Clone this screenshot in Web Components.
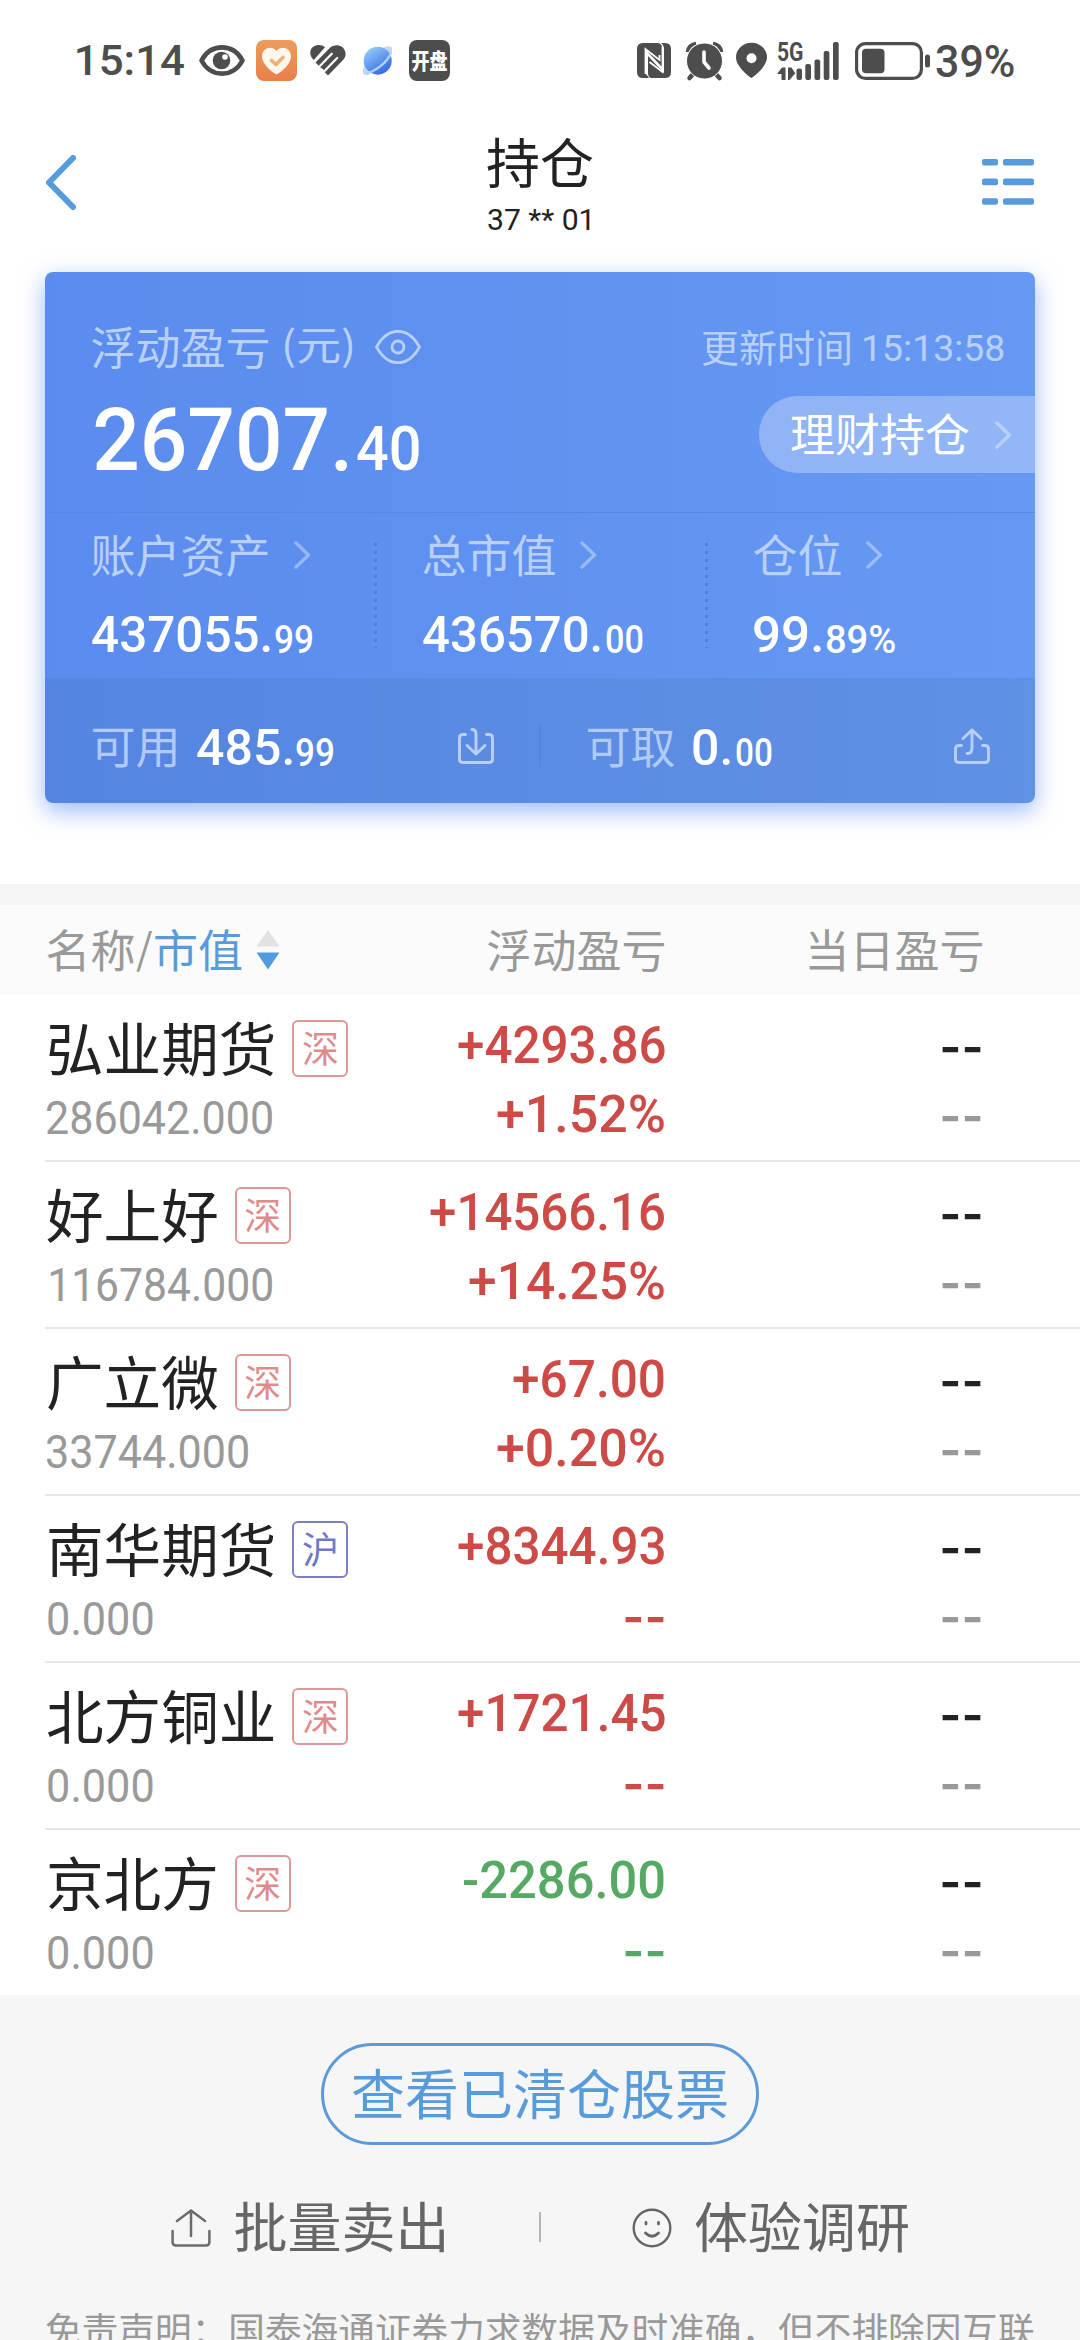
<!DOCTYPE html>
<html lang="zh-CN">
<head>
<meta charset="utf-8">
<title>持仓</title>
<style>
body{margin:0;background:#fff;width:1080px;height:2340px;overflow:hidden;font-family:"Noto Sans CJK SC",sans-serif;color:#222}
</style>
</head>
<body>
<holdings-page></holdings-page>
<script>
const canvas = document.createElement('canvas').getContext('2d');

function define(name, css, html, init) {
  const tpl = document.createElement('template');
  tpl.innerHTML = `<style>:host{display:block;box-sizing:border-box}${css}</style>${html}`;
  customElements.define(name, class extends HTMLElement {
    connectedCallback() {
      if (this.shadowRoot) return;
      const root = this.attachShadow({ mode: 'open' });
      root.append(tpl.content.cloneNode(true));
      if (init) init(this, root);
    }
  });
}

/* Chinese label; optical centring of the ideographs in their line */
define('cn-text', 'span{display:block;line-height:1;margin-top:-.075em;white-space:nowrap} :host{flex:none;white-space:nowrap}', '<span><slot></slot></span>');

/* Numerals whose glyph outlines fill exactly w x h */
define('num-text', ':host{flex:none} span{display:block;width:max-content;white-space:pre;line-height:1;transform-origin:0 0}', '<span><slot></slot></span>',
  (el, root) => {
    const w = +el.getAttribute('w'), h = +el.getAttribute('h');
    const wt = el.getAttribute('wt') || 500, fam = el.getAttribute('fam') || 'Roboto';
    const size = Math.round(+el.getAttribute('size') || h / 0.73);
    canvas.font = `${wt} ${size}px ${fam.includes(' ') ? '"' + fam + '"' : fam}`;
    const m = canvas.measureText(el.textContent);
    const sx = w / (m.actualBoundingBoxRight + m.actualBoundingBoxLeft);
    const sy = h / (m.actualBoundingBoxAscent + m.actualBoundingBoxDescent);
    const A = m.fontBoundingBoxAscent, D = m.fontBoundingBoxDescent;
    const base = (size - A - D) / 2 + A;
    const s = root.querySelector('span');
    s.style.font = `${wt} ${size}px/1 "${fam}",sans-serif`;
    s.style.transform = `matrix(${sx},0,0,${sy},${sx * m.actualBoundingBoxLeft},${-sy * (base - m.actualBoundingBoxAscent)})`;
    el.style.width = w + 'px';
    el.style.height = h + 'px';
  });

define('chevron-icon', ':host{width:17px;height:28px;flex:none} svg{display:block}',
  '<svg width="17" height="28" fill="none" stroke="#fff" stroke-opacity=".36" stroke-width="3.4" stroke-linecap="round" stroke-linejoin="round"><path d="M2 2 14.5 14 2 26"/></svg>');

define('status-bar', `
:host{height:120px;display:flex;align-items:center;padding:1px 0 0 77px;color:#4d4d4d}
svg{display:block;flex:none;overflow:visible}
.app{width:41px;height:41px;border-radius:8px;background:#4d4d4d;color:#fff;display:flex;align-items:center;justify-content:center;margin-left:15.5px}`, `
<num-text w="107" h="31">15:14</num-text>
<svg style="margin-left:15px" width="46" height="31" viewBox="0 0 46 31"><path d="M2.500 15.500C12-2 34-2 43.500 15.500 34 33 12 33 2.500 15.500Z" fill="none" stroke="#4d4d4d" stroke-width="4.600" stroke-linejoin="round"/><circle cx="22.500" cy="15.500" r="8.800" fill="#4d4d4d"/><circle cx="26" cy="12" r="2.800" fill="#fff"/></svg>
<svg style="margin-left:10.500px" width="41" height="41" viewBox="0 0 41 41"><defs><linearGradient id="o" x2="0" y2="1"><stop stop-color="#ec9c5b"/><stop offset="1" stop-color="#e97f4b"/></linearGradient></defs><rect width="41" height="41" rx="8" fill="url(#o)"/><path d="M20.500 34.500C14 31 6 23.500 6 16.500 6 8 16 5 20.500 11 25 5 35 8 35 16.500 35 23.500 27 31 20.500 34.500Z" fill="#fff6ec"/><path d="M15.500 20.500 20 24.500 27 17.500" fill="none" stroke="#ecb079" stroke-width="3.600" stroke-linecap="round" stroke-linejoin="round"/></svg>
<svg style="margin-left:13px" width="36" height="31" viewBox="0 0 36 31"><path d="M3.800 15C-2 10-.5 1 7 .2 10-.2 13 .5 15 2.200Z" fill="#4d4d4d"/><path d="M5.500 17.500 19.500 3.200C24-1 31-.5 34 4 36.500 8 36 12 33 15L18 30.500 14.500 27 15.500 26 10.500 22.500Z" fill="#4d4d4d"/><path d="M8.700 22.300 21.800 8.700M13.600 27 27.200 13" stroke="#fff" stroke-width="2.200" stroke-linecap="round"/></svg>
<svg style="margin-left:17.500px" width="30" height="30" viewBox="0 0 30 30"><defs><linearGradient id="p" x1=".2" y1=".1" x2=".8" y2="1"><stop stop-color="#8fc8f8"/><stop offset=".5" stop-color="#5c94ee"/><stop offset="1" stop-color="#2f62dc"/></linearGradient></defs><path d="M20 2C28-2 31 1 28 9M1.500 19C-1 25-1.500 31 7 28.500" fill="#c4d6f8"/><circle cx="14.700" cy="14.700" r="14" fill="url(#p)"/><path d="M1 27.500C11 27 24 17 28.500 6" fill="none" stroke="#b5d4fb" stroke-width="2.200"/></svg>
<div class="app"><num-text w="35" h="22" wt="900" fam="Noto Sans CJK SC" size="35">开盘</num-text></div>
<svg style="margin-left:187px" width="34" height="35" viewBox="0 0 34 35"><path d="M6 0H20Q25 0 25 5V24L9 7V31L12 35H6Q0 35 0 29V6Q0 0 6 0ZM24 0H28Q34 0 34 6V29Q34 35 28 35H15Q11 35 11 30V13L27 30V5Q27 2 24 0Z" fill="#4d4d4d"/><path d="M8.500 31V6L22.500 17V12M25.500 4V29L12.500 19" fill="none" stroke="#fff" stroke-width="1.800"/></svg>
<svg style="margin-left:15px" width="37" height="38" viewBox="0 0 37 38"><path d="M1.500 10A9 9 0 0 1 10 1.500M35.500 10A9 9 0 0 0 27 1.500" stroke="#4d4d4d" stroke-width="3.600" fill="none"/><path d="M8 31 3.500 36M29 31 33.500 36" stroke="#4d4d4d" stroke-width="4.500" stroke-linecap="round"/><circle cx="18.500" cy="19" r="18" fill="#4d4d4d" stroke="#fff" stroke-width="1"/><path d="M18 10V20L23 26" fill="none" stroke="#fff" stroke-width="3.600" stroke-linecap="round" stroke-linejoin="round"/></svg>
<svg style="margin-left:13.500px" width="31" height="35" viewBox="0 0 31 35"><path fill-rule="evenodd" d="M15.500 35C12 33 0 23 0 14.500A15.200 14.500 0 0 1 31 14.500C31 23 19 33 15.500 35ZM15.500 10.200A5 5 0 1 0 15.500 20.200 5 5 0 0 0 15.500 10.200Z" fill="#4d4d4d"/></svg>
<svg style="margin-left:10px" width="62" height="38" viewBox="0 0 62 38" fill="#4d4d4d"><text x="0" y="19.300" font-family="Roboto" font-weight="700" font-size="26" textLength="26.500" lengthAdjust="spacingAndGlyphs">5G</text><path d="M0 32 5 25.500H8.500V38H4.500V32ZM11 25.500H14.500L18 31H18.500L12.500 38H11Z"/><rect x="19.500" y="26.500" width="5.500" height="11.500" rx="2"/><rect x="28.300" y="22" width="5.700" height="16" rx="2"/><rect x="37.500" y="17.500" width="5.700" height="20.500" rx="2"/><rect x="46.700" y="9" width="5.700" height="29" rx="2"/><rect x="56" y="0" width="5.700" height="38" rx="2"/></svg>
<svg style="margin-left:15.500px" width="75" height="38" viewBox="0 0 75 38"><rect x="1.600" y="1.600" width="64.800" height="34.800" rx="9" fill="none" stroke="#4d4d4d" stroke-width="3.200"/><rect x="7" y="6.800" width="22.500" height="24.400" rx="4" fill="#4d4d4d"/><rect x="70" y="12.500" width="5" height="13" rx="2.500" fill="#4d4d4d"/></svg>
<num-text style="margin-left:6.500px" w="78" h="32">39%</num-text>`);

define('page-header', `
:host{height:152px;display:flex;justify-content:space-between;align-items:flex-start;padding:0 45px 0 45px}
svg{display:block}.mid{display:flex;flex-direction:column;align-items:center}
cn-text{font-size:54px;margin:18px 0 0}num-text{margin:21px 1.500px 0 0}`, `
<svg style="margin-top:35px" width="53" height="55" fill="none" stroke="#589bdb" stroke-width="6" stroke-linecap="round" stroke-linejoin="round"><path d="M28 3 4 27.500 28 52"/></svg>
<div class="mid"><cn-text><slot></slot></cn-text><num-text w="102" h="21" wt="450">37 ** 01</num-text></div>
<svg style="margin-top:39px" width="53" height="46" fill="#589bdb"><rect y="0" width="16" height="6.600" rx="2"/><rect x="21" width="31" height="6.600" rx="2"/><rect y="19.600" width="16" height="6.600" rx="2"/><rect x="21" y="19.600" width="31" height="6.600" rx="2"/><rect y="39.200" width="16" height="6.600" rx="2"/><rect x="21" y="39.200" width="31" height="6.600" rx="2"/></svg>`);

/* Label with chevron above a two-size amount */
define('asset-cell', `
cn-text{font-size:45px;color:#b8d0fb}
.l{display:flex;align-items:center;gap:23px;height:44px}
.v{display:flex;align-items:flex-end;margin:38px 0 0 1.500px;color:#fff}`, `
<div class="l"><cn-text><slot></slot></cn-text><chevron-icon></chevron-icon></div><div class="v"><slot name="v"></slot></div>`);

define('summary-card', `
:host{margin:0 45px;height:531px;border-radius:8px;background:linear-gradient(90deg,#5a8bee,#6699f3);box-shadow:0 8px 24px rgba(74,130,245,.55);overflow:hidden;color:#fff;flex:none}
.main{height:240px;box-sizing:border-box;padding-top:50px}
.a{display:flex;align-items:center;height:50px;padding:0 31px 0 45.500px;color:#b8d0fb}
.a cn-text{font-size:45px}.b{display:flex;align-items:flex-end;justify-content:space-between;height:77px;margin-top:24px;padding-left:49.500px}
.big{display:flex;align-items:flex-end;gap:9.500px;margin-bottom:2px}
.pill{width:276px;height:77px;box-sizing:border-box;border-radius:38px 0 0 38px;background:rgba(255,255,255,.29);display:flex;align-items:center;justify-content:space-between;padding:0 23.500px 0 31px;font-size:45px}
.cells{height:166px;box-sizing:border-box;border-top:1px solid #5588e6;padding:20px 0 0 45.500px;display:grid;grid-template-columns:283px 48px 283px 48px 1fr}
.dots{width:3px;height:105px;margin-top:10px;background:repeating-linear-gradient(180deg,rgba(50,100,190,.4) 0 3px,transparent 3px 8px)}
.foot{height:125px;background:rgba(60,90,130,.12);display:flex;align-items:center;padding:11px 45px 0 45.500px;box-sizing:border-box}
.foot cn-text{font-size:45px;color:#b0cafa}.foot svg,.a svg{display:block;flex:none}
.bar{width:2px;height:42px;background:#5685e0}`, `
<div class="main">
 <div class="a"><cn-text>浮动盈亏</cn-text><num-text style="margin-left:14px" w="68" h="41" wt="400" fam="Noto Sans CJK SC" size="45">(元)</num-text>
 <svg style="margin-left:22px" width="46" height="34" viewBox="0 0 46 34" fill="none" stroke="#b8d0fb" stroke-width="2.800"><path d="M1.500 17C13-4 33-4 44.500 17 33 38 13 38 1.500 17Z" stroke-linejoin="round"/><circle cx="23" cy="17" r="6"/></svg>
 <cn-text style="font-size:38px;margin-left:auto">更新时间</cn-text><num-text style="margin:0 0 0 11px" w="140" h="27.500" wt="450">15:13:58</num-text></div>
 <div class="b"><div class="big"><num-text w="253" h="65">26707.</num-text><num-text w="62" h="46">40</num-text></div>
 <div class="pill"><cn-text>理财持仓</cn-text><chevron-icon></chevron-icon></div></div>
</div>
<div class="cells">
 <asset-cell>账户资产<num-text slot="v" w="178" h="38">437055.</num-text><num-text slot="v" style="margin-left:5px" w="37" h="27">99</num-text></asset-cell>
 <div class="dots"></div>
 <asset-cell>总市值<num-text slot="v" w="177" h="38">436570.</num-text><num-text slot="v" style="margin-left:5.500px" w="37" h="27">00</num-text></asset-cell>
 <div class="dots"></div>
 <asset-cell>仓位<num-text slot="v" w="67" h="38">99.</num-text><num-text slot="v" style="margin-left:5px" w="69" h="27">89%</num-text></asset-cell>
</div>
<div class="foot">
 <cn-text>可用</cn-text><num-text style="margin:1px 0 0 16px" w="95" h="38">485.</num-text><num-text style="margin:12px 0 0 4px" w="37" h="27">99</num-text>
 <svg style="margin-left:125.500px" width="36" height="36" fill="none" stroke="#b8d0fb" stroke-width="2.900" stroke-linecap="round" stroke-linejoin="round"><path d="M7.500 6.500H5Q1.500 6.500 1.500 10V31Q1.500 34.500 5 34.500H31Q34.500 34.500 34.500 31V10Q34.500 6.500 31 6.500H28.500M14 1.500Q18 1.500 18 6V26M9 17.500 18 26 27 17.500"/></svg>
 <div class="bar" style="margin-left:45px"></div>
 <cn-text style="margin-left:44.500px">可取</cn-text><num-text style="margin:1px 0 0 17.500px" w="37" h="38">0.</num-text><num-text style="margin:12px 0 0 5.500px" w="36" h="27">00</num-text>
 <svg style="margin-left:auto" width="36" height="36" fill="none" stroke="#b8d0fb" stroke-width="2.900" stroke-linecap="round" stroke-linejoin="round"><path d="M7.500 17.500H5Q1.500 17.500 1.500 21V31Q1.500 34.500 5 34.500H31Q34.500 34.500 34.500 31V21Q34.500 17.500 31 17.500H28.500M13 25.500Q18 26 18 19.500V2M9 10.500 18 2 27 10.500"/></svg>
</div>`);

define('table-head', `
:host{height:111px;border-top:21px solid #f5f5f5;background:#fbfbfb;color:#999;font-size:45px;display:grid;grid-template-columns:385px 236px 318px;align-items:center;padding-left:45.500px}
.n{display:flex;align-items:center}.n svg{margin-left:12.500px;display:block}.r{justify-self:end}`, `
<div class="n"><cn-text>名称</cn-text><num-text style="margin:0 1.500px 0 0" w="16" h="41" wt="400" fam="Noto Sans CJK SC" size="45">/</num-text><cn-text style="color:#589bdb">市值</cn-text>
<svg width="24" height="40" viewBox="0 0 24 40"><path d="M12 0 23.500 16.500H.5Z" fill="#e0e2e4"/><path d="M12 39.500 23.500 22.500H.5Z" fill="#539be0"/></svg></div>
<cn-text class="r">浮动盈亏</cn-text><cn-text class="r">当日盈亏</cn-text>`);

define('holding-row', `
:host{height:167px;display:grid;grid-template-columns:385px 234px 316px;margin-left:45px;border-bottom:2px solid #e8e8e8}
:host([last]){border:0;height:165px}
.name{display:flex;align-items:center;gap:16px;height:57px;margin:25px 0 0 1px;font-size:57.600px}
.tag{width:56px;height:57px;box-sizing:border-box;border:2px solid #de9898;border-radius:6px;color:#e08b8b;font-size:37px;display:flex;align-items:center;justify-content:center}
.tag.sh{border-color:#7a7fc8;color:#7277c6}
.val{color:#999;margin-top:24px}
.col{display:flex;flex-direction:column;align-items:flex-end;gap:30px;padding-top:31px}
.col>div{height:39px;display:flex;align-items:center}
.d{margin-top:8px}`, `
<div><div class="name"><cn-text id="n"></cn-text><div class="tag"><cn-text id="t"></cn-text></div></div><div class="val"></div></div>
<div class="col pl"><div></div><div></div></div>
<div class="col"><div><num-text class="d" w="38.500" h="5.300" size="53" fam="Inter">--</num-text></div><div style="color:#999"><num-text class="d" w="38.500" h="5.300" size="53" fam="Inter">--</num-text></div></div>`,
  (el, root) => {
    const a = k => el.getAttribute(k);
    root.getElementById('n').textContent = a('name');
    root.getElementById('t').textContent = a('tag');
    if (a('tag') === '沪') root.querySelector('.tag').classList.add('sh');
    const num = (text, w, h, extra = '') => `<num-text w="${w}" h="${h}" ${extra}>${text}</num-text>`;
    const [v, vw, vx] = a('value').split('|');
    root.querySelector('.val').innerHTML = num(v, vw, 32.6, `wt="450" style="margin-left:${vx}px"`);
    root.querySelector('.pl').style.color = a('pl')[0] === '-' ? '#55a962' : '#cd4a47';
    root.querySelectorAll('.pl>div').forEach((d, i) => {
      const [t, w] = a(i ? 'pct' : 'pl').split('|');
      d.innerHTML = t === '--' ? num(t, 38.5, 5.3, 'class="d" style="margin-right:1px" size="53" fam="Inter"') : num(t, w, 38.6);
    });
  });

define('page-footer', `
:host{background:#f6f6f6;height:345px;padding-top:48px;overflow:hidden}
.btn{width:438px;height:102px;box-sizing:border-box;border:3px solid #5b9bd9;border-radius:51px;margin:0 auto;color:#589bdb;font-size:54px;display:flex;align-items:center;justify-content:center}
.links{display:flex;align-items:center;height:60px;margin-top:52px;color:#666;font-size:54px;padding-left:171px}
.links svg{display:block;flex:none;margin-top:1px}.bar{width:2px;height:30px;background:#b5b5b5}
.note{margin:56px 0 0 45px;color:#999;font-size:36.670px}`, `
<div class="btn"><cn-text>查看已清仓股票</cn-text></div>
<div class="links"><svg width="40" height="38" fill="none" stroke="#6c6c6c" stroke-width="2.500" stroke-linecap="round" stroke-linejoin="round"><path d="M1.600 22V33Q1.600 36.500 5 36.500H35Q38.400 36.500 38.400 33V22M20 27V1.500M6 12 20 1.500 34 12"/></svg>
<cn-text style="margin-left:22.500px">批量卖出</cn-text><div class="bar" style="margin-left:89px"></div>
<svg style="margin-left:91px" width="40" height="40" fill="none" stroke="#666" stroke-width="2.400" stroke-linecap="round"><circle cx="20" cy="20" r="18.300"/><path d="M14 14.500V16M26.500 14.500V16M13.500 25Q20 31.500 26.500 25" stroke-width="2.800"/></svg>
<cn-text style="margin-left:22.500px">体验调研</cn-text></div>
<cn-text class="note">免责声明：国泰海通证券力求数据及时准确，但不排除因互联</cn-text>`);

define('holdings-page', ':host{width:1080px;height:2340px;overflow:hidden;background:#fff} .gap{height:81px}', `
<status-bar></status-bar>
<page-header>持仓</page-header>
<summary-card></summary-card>
<div class="gap"></div>
<table-head></table-head>
<holding-row name="弘业期货" tag="深" value="286042.000|225|2" pl="+4293.86|206.500" pct="+1.52%|167"></holding-row>
<holding-row name="好上好" tag="深" value="116784.000|222|5" pl="+14566.16|234" pct="+14.25%|195"></holding-row>
<holding-row name="广立微" tag="深" value="33744.000|201|2" pl="+67.00|151" pct="+0.20%|167"></holding-row>
<holding-row name="南华期货" tag="沪" value="0.000|104.500|2.500" pl="+8344.93|206.500" pct="--"></holding-row>
<holding-row name="北方铜业" tag="深" value="0.000|104.500|2.500" pl="+1721.45|206.500" pct="--"></holding-row>
<holding-row last name="京北方" tag="深" value="0.000|104.500|2.500" pl="-2286.00|200" pct="--"></holding-row>
<page-footer></page-footer>`);
</script>
</body>
</html>
